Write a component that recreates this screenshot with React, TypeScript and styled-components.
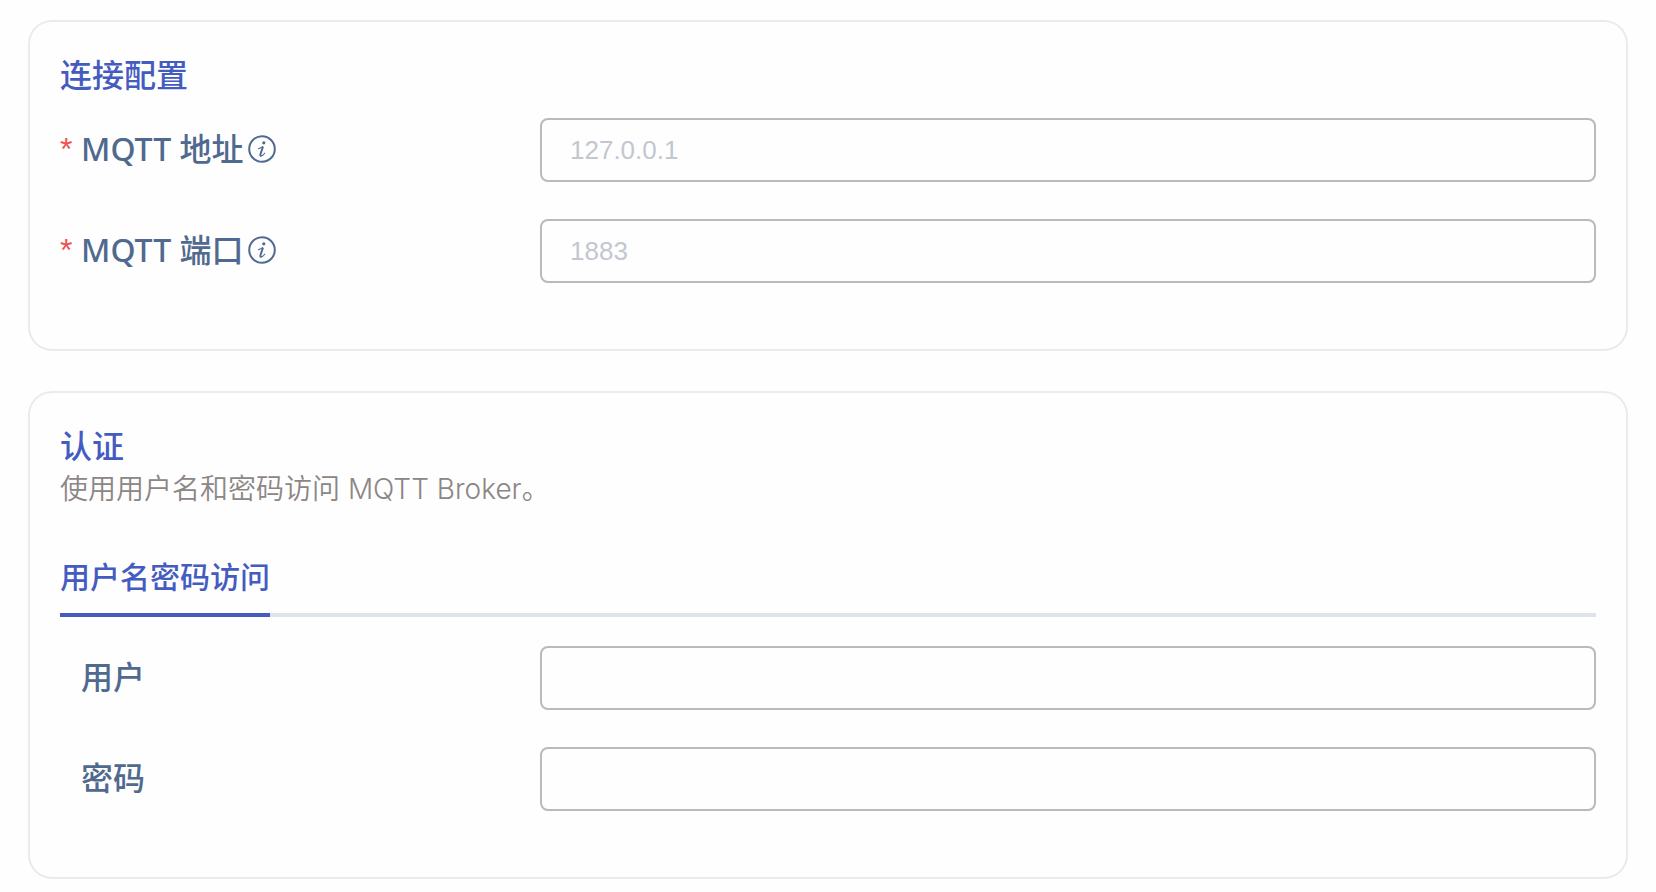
import { useId, useState } from "react";
import type { InputHTMLAttributes } from "react";
import styled, { createGlobalStyle } from "styled-components";

const colors = {
  primary: "#445bc0",
  label: "#50698f",
  muted: "#8c8685",
  required: "#f0524f",
  cardBorder: "#ebebeb",
  fieldBorder: "#bababa",
  placeholder: "#c3c7cf",
  divider: "#dfe3ec",
};

const GlobalStyle = createGlobalStyle`
  *, *::before, *::after { box-sizing: border-box; }
  body {
    margin: 0;
    background: #fefefe;
    font-family: "Noto Sans", "Noto Sans CJK SC", sans-serif;
  }
`;

const Page = styled.main`
  display: flex;
  flex-direction: column;
  gap: 40px;
  padding: 20px 28px 12px;
`;

const Card = styled.section`
  padding: 31px 30px 29px;
  border: 2px solid ${colors.cardBorder};
  border-radius: 24px;
`;

const CardTitle = styled.h2`
  margin: 0;
  font-family: "Noto Sans CJK SC", sans-serif;
  font-size: 32px;
  font-weight: 500;
  line-height: 40px;
  color: ${colors.primary};
`;

const Description = styled.p`
  margin: 3px 0 0;
  font-family: Inter, "Noto Sans CJK SC", sans-serif;
  font-size: 28px;
  font-weight: 350;
  line-height: 44px;
  color: ${colors.muted};
`;

const TabBar = styled.div`
  display: flex;
  margin-top: 40px;
  box-shadow: inset 0 -4px ${colors.divider};
`;

const Tab = styled.button<{ $active: boolean }>`
  padding: 2px 0 16px;
  border: 0;
  border-bottom: 4px solid ${(p) => (p.$active ? colors.primary : "transparent")};
  background: none;
  font-family: "Noto Sans CJK SC", sans-serif;
  font-size: 30px;
  font-weight: 500;
  line-height: 44px;
  color: ${colors.primary};
  cursor: pointer;
`;

const Fields = styled.div<{ $gap: number }>`
  margin-top: ${(p) => p.$gap}px;
`;

const Row = styled.div`
  display: grid;
  grid-template-columns: 480px minmax(0, 1fr);
  align-items: center;
  margin-bottom: 37px;
`;

const LabelCell = styled.div`
  display: flex;
  align-items: center;
  gap: 5px;
  color: ${colors.label};
`;

const Label = styled.label`
  display: flex;
  padding-bottom: 2px;
  font-size: 32px;
  font-weight: 460;
  line-height: 40px;
`;

const Mark = styled.span`
  width: 21px;
  font-family: "Liberation Sans", sans-serif;
  font-weight: 400;
  color: ${colors.required};
`;

const Input = styled.input`
  width: 100%;
  height: 64px;
  padding: 0 28px;
  border: 2px solid ${colors.fieldBorder};
  border-radius: 8px;
  background: transparent;
  font-family: "Liberation Sans", sans-serif;
  font-size: 26px;
  color: ${colors.label};
  outline: none;

  &::placeholder {
    color: ${colors.placeholder};
    opacity: 1;
  }
  &:focus {
    border-color: ${colors.primary};
  }
`;

const InfoSvg = styled.svg`
  display: block;
  flex: none;
  margin-bottom: 2px;
`;

function InfoIcon() {
  return (
    <InfoSvg width="28" height="28" viewBox="0 0 28 28" fill="none" stroke="currentColor" aria-hidden="true">
      <circle cx="14" cy="14" r="12.8" strokeWidth="2" />
      <circle cx="15.8" cy="7.8" r="1.6" fill="currentColor" stroke="none" />
      <path d="M10.6 13.6c1.4-.3 2.8-1.2 4-2" strokeWidth="1.1" strokeLinecap="round" />
      <path d="M15 11.6 12.4 19.4c-.3 1.1.2 1.6 1 1.2" strokeWidth="1.9" strokeLinejoin="round" />
      <path d="M13.2 20.8c1.3-.1 2.5-1.2 3.5-2.6" strokeWidth="1.1" strokeLinecap="round" />
    </InfoSvg>
  );
}

interface FieldProps extends InputHTMLAttributes<HTMLInputElement> {
  label: string;
  info?: boolean;
}

function Field({ label, info, required, ...inputProps }: FieldProps) {
  const id = useId();
  return (
    <Row>
      <LabelCell>
        <Label htmlFor={id}>
          <Mark aria-hidden="true">{required ? "*" : ""}</Mark>
          {label}
        </Label>
        {info && <InfoIcon />}
      </LabelCell>
      <Input id={id} required={required} {...inputProps} />
    </Row>
  );
}

const authTabs = ["用户名密码访问"];

export default function App() {
  const [activeTab, setActiveTab] = useState(authTabs[0]);
  return (
    <>
      <GlobalStyle />
      <Page>
        <Card>
          <CardTitle>连接配置</CardTitle>
          <Fields $gap={25}>
            <Field label="MQTT 地址" placeholder="127.0.0.1" required info />
            <Field label="MQTT 端口" placeholder="1883" required info />
          </Fields>
        </Card>
        <Card>
          <CardTitle>认证</CardTitle>
          <Description>使用用户名和密码访问 MQTT Broker。</Description>
          <TabBar role="tablist">
            {authTabs.map((tab) => (
              <Tab
                key={tab}
                type="button"
                role="tab"
                aria-selected={tab === activeTab}
                $active={tab === activeTab}
                onClick={() => setActiveTab(tab)}
              >
                {tab}
              </Tab>
            ))}
          </TabBar>
          <Fields $gap={29}>
            <Field label="用户" autoComplete="username" />
            <Field label="密码" type="password" autoComplete="current-password" />
          </Fields>
        </Card>
      </Page>
    </>
  );
}
